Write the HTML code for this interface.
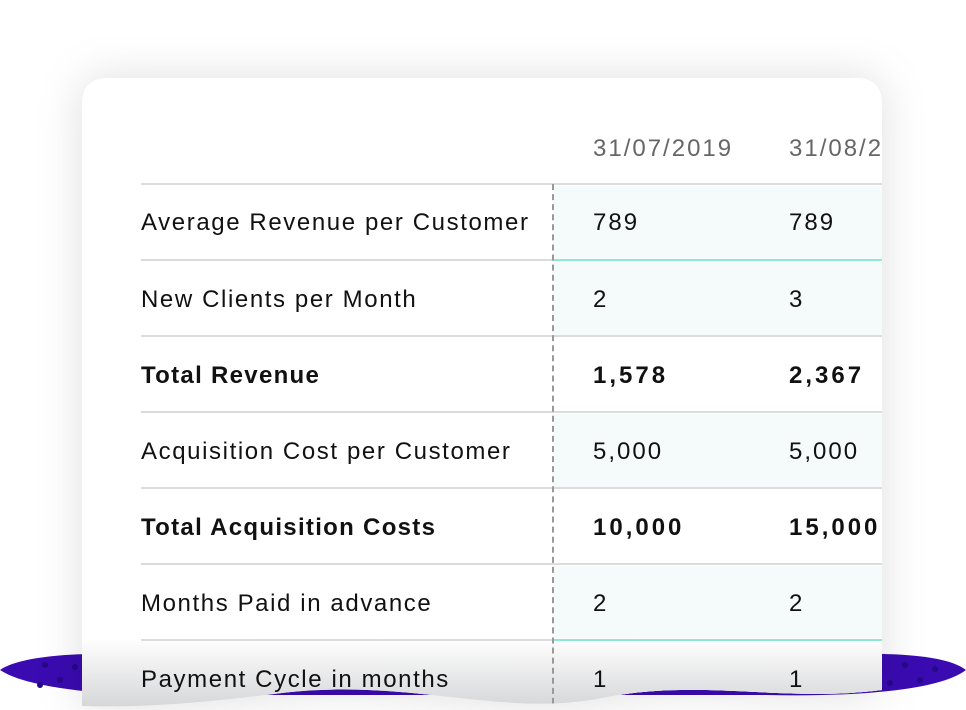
<!DOCTYPE html>
<html><head><style>
body{margin:0;width:966px;height:710px;background:#fff;position:relative;overflow:hidden;font-family:"Liberation Sans",sans-serif;}
.blob{position:absolute;left:0;top:645px;width:966px;height:60px;}
.wrap{position:absolute;left:82px;top:78px;width:800px;height:632px;filter:drop-shadow(0 0 22px rgba(0,0,0,0.13));}
.card{position:absolute;left:0;top:0;width:800px;height:632px;background:#fff;overflow:hidden;
clip-path:path('M0 26 Q0 0 26 0 H774 Q800 0 800 26 V612 C700 625 620 600 520 620 C420 640 330 600 200 615 C120 625 60 630 0 628 Z');}
.fade{position:absolute;left:0;top:560px;width:800px;height:80px;background:linear-gradient(#fff,#cfd0d2);}
.hdr{position:absolute;top:57px;font-size:24px;color:#666;letter-spacing:2px}
.line{position:absolute;left:59px;width:741px;height:2px;background:#dcdcdc}
.tint{position:absolute;left:471px;width:329px;height:74px;background:#f5fafa}
.lab{position:absolute;left:59px;font-size:24px;color:#111;letter-spacing:1.6px}
.v{position:absolute;font-size:24px;color:#111;letter-spacing:2px}
.b{font-weight:bold}
.v.b{letter-spacing:3px}
.lab.b{letter-spacing:1.3px}
.dash{position:absolute;left:470px;top:106px;height:530px;border-left:2px dashed #999}
.teal{position:absolute;left:471px;width:329px;height:2px;background:#8ee8d3}
</style></head><body>
<svg class="blob" viewBox="0 0 966 60"><path d="M0 25 C30 5 120 8 200 10 L766 10 C860 8 940 5 966 25 C940 45 860 52 766 50 L200 50 C120 52 30 45 0 25Z" fill="#3a0bb0"/>
<g fill="#28078a"><circle cx="45" cy="20" r="3"/><circle cx="60" cy="35" r="3"/><circle cx="75" cy="22" r="3"/><circle cx="40" cy="40" r="3"/><circle cx="905" cy="20" r="3"/><circle cx="920" cy="35" r="3"/><circle cx="890" cy="38" r="3"/><circle cx="935" cy="24" r="3"/></g></svg>
<div class="wrap"><div class="card">
<div class="tint" style="top:108px"></div>
<div class="tint" style="top:184px"></div>
<div class="tint" style="top:336px"></div>
<div class="tint" style="top:488px"></div>
<div class="tint" style="top:564px"></div>
<div class="fade"></div>
<div class="hdr" style="left:511px">31/07/2019</div>
<div class="hdr" style="left:707px">31/08/2019</div>
<div class="line" style="top:105px"></div>
<div class="line" style="top:181px"></div>
<div class="line" style="top:257px"></div>
<div class="line" style="top:333px"></div>
<div class="line" style="top:409px"></div>
<div class="line" style="top:485px"></div>
<div class="line" style="top:561px"></div>
<div class="teal" style="top:181px"></div>
<div class="teal" style="top:561px"></div>
<div class="dash"></div>
<div class="lab" style="top:131px">Average Revenue per Customer</div><div class="v" style="left:511px;top:131px">789</div><div class="v" style="left:707px;top:131px">789</div>
<div class="lab" style="top:208px">New Clients per Month</div><div class="v" style="left:511px;top:208px">2</div><div class="v" style="left:707px;top:208px">3</div>
<div class="lab b" style="top:284px">Total Revenue</div><div class="v b" style="left:511px;top:284px">1,578</div><div class="v b" style="left:707px;top:284px">2,367</div>
<div class="lab" style="top:360px">Acquisition Cost per Customer</div><div class="v" style="left:511px;top:360px">5,000</div><div class="v" style="left:707px;top:360px">5,000</div>
<div class="lab b" style="top:436px">Total Acquisition Costs</div><div class="v b" style="left:511px;top:436px">10,000</div><div class="v b" style="left:707px;top:436px">15,000</div>
<div class="lab" style="top:512px">Months Paid in advance</div><div class="v" style="left:511px;top:512px">2</div><div class="v" style="left:707px;top:512px">2</div>
<div class="lab" style="top:588px">Payment Cycle in months</div><div class="v" style="left:511px;top:588px">1</div><div class="v" style="left:707px;top:588px">1</div>
</div></div>
</body></html>
